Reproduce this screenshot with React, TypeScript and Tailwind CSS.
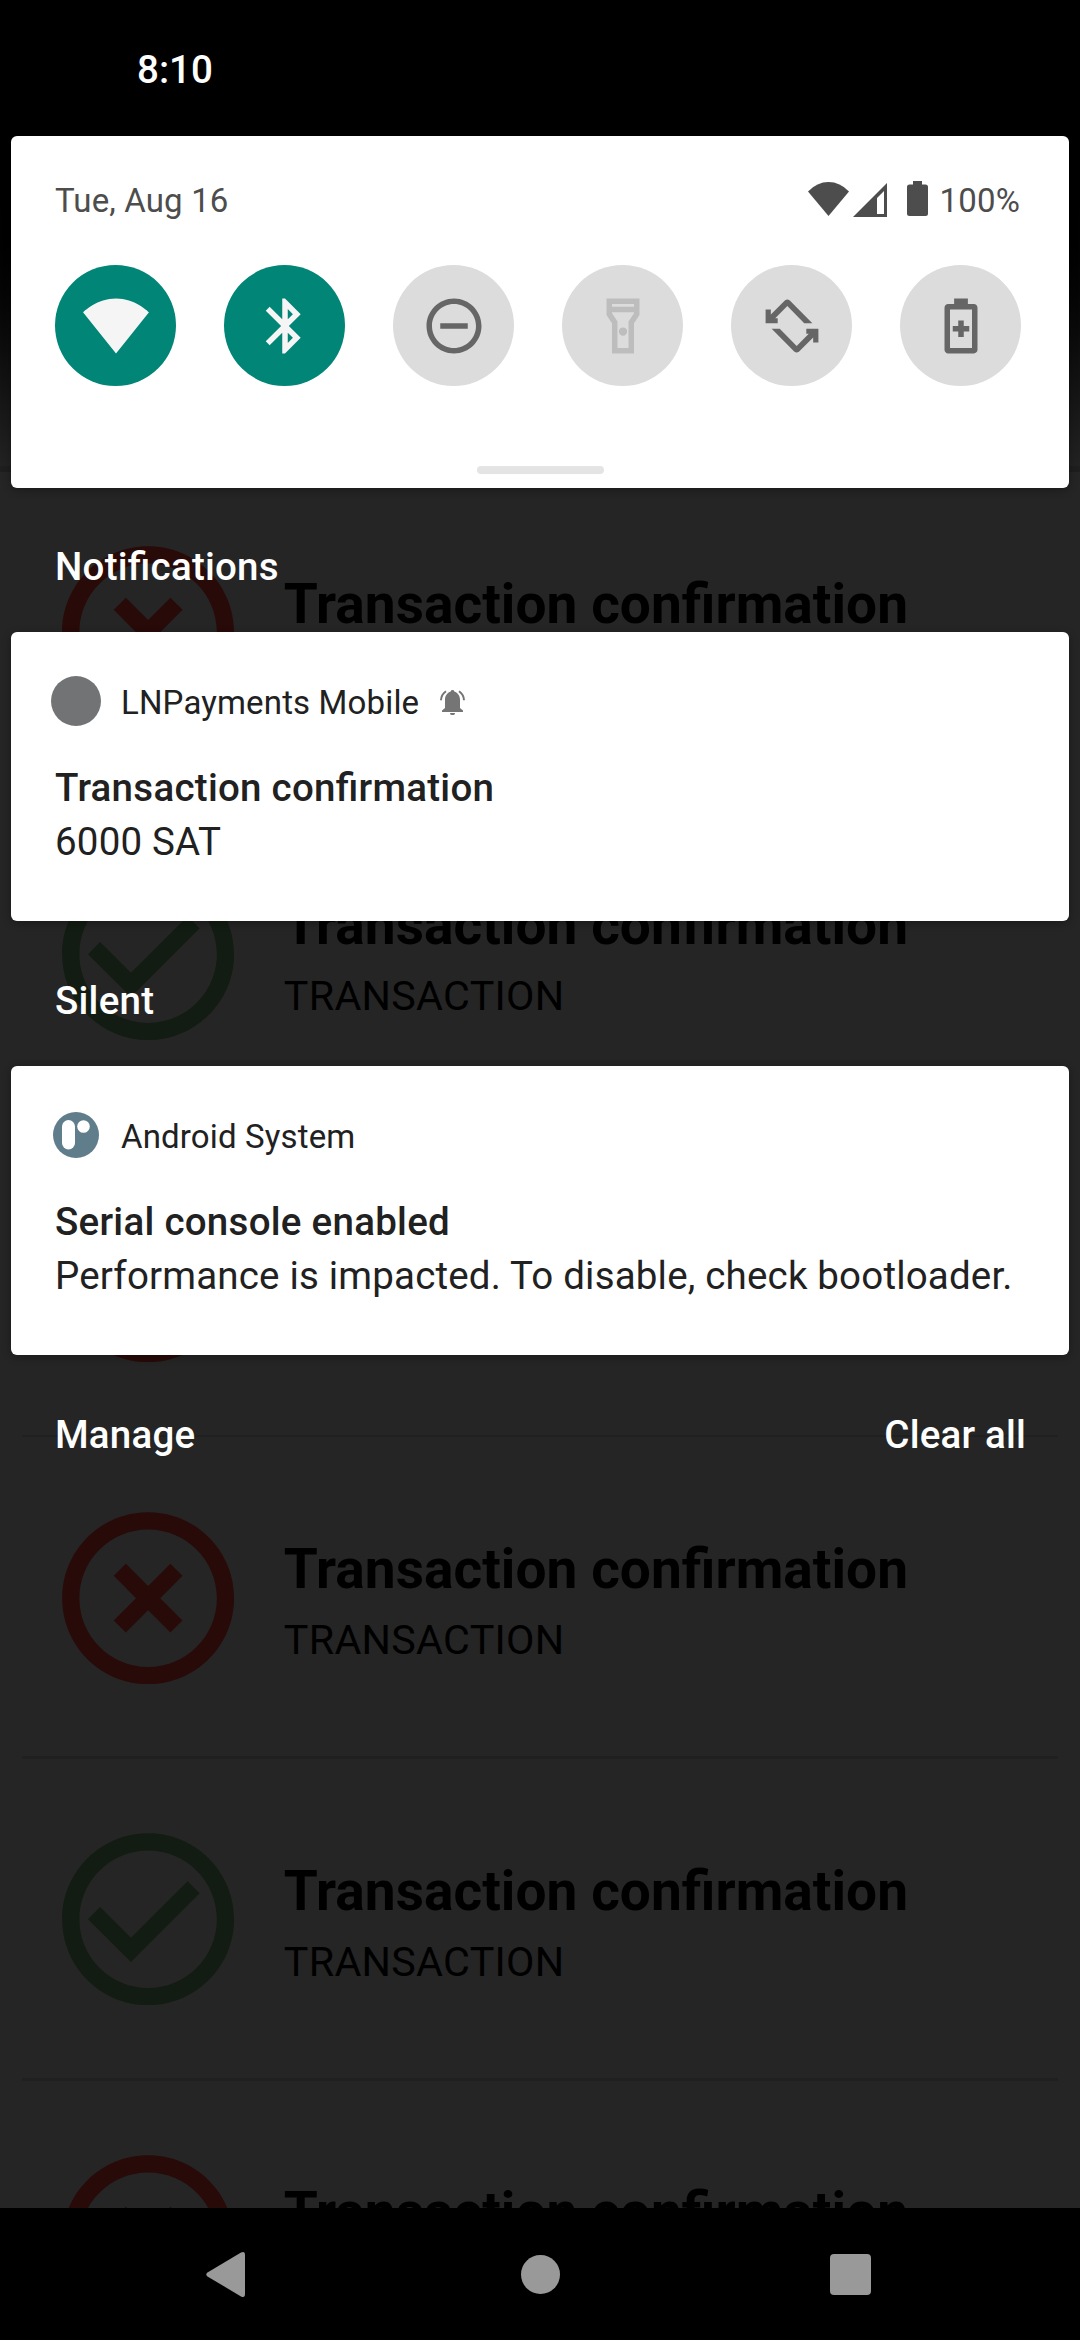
import React from "react";

type Row = { kind: "error" | "ok"; title?: string; subtitle?: string };

const TITLE = "Transaction confirmation";
const SUBTITLE = "TRANSACTION";

/* Labels that lie fully behind a card or the navigation bar are left out. */
const ROWS: Row[] = [
  { kind: "error", title: TITLE },
  { kind: "ok", title: TITLE, subtitle: SUBTITLE },
  { kind: "error" },
  { kind: "error", title: TITLE, subtitle: SUBTITLE },
  { kind: "ok", title: TITLE, subtitle: SUBTITLE },
  { kind: "error", title: TITLE },
];

function StatusMark({ kind }: { kind: "error" | "ok" }) {
  return kind === "error" ? (
    <svg viewBox="0 0 24 24" className="h-[206.25px] w-[206.25px] shrink-0 fill-[#280a08]">
      <path d="M14.59 8L12 10.59 9.41 8 8 9.41 10.59 12 8 14.59 9.41 16 12 13.41 14.59 16 16 14.59 13.41 12 16 9.41 14.59 8zM12 2C6.47 2 2 6.47 2 12s4.47 10 10 10 10-4.47 10-10S17.53 2 12 2zm0 18c-4.41 0-8-3.59-8-8s3.59-8 8-8 8 3.59 8 8-3.59 8-8 8z" />
    </svg>
  ) : (
    <svg viewBox="0 0 24 24" className="h-[206.25px] w-[206.25px] shrink-0 fill-[#121c12]">
      <path d="M12 2C6.48 2 2 6.48 2 12s4.48 10 10 10 10-4.48 10-10S17.52 2 12 2zm0 18c-4.41 0-8-3.59-8-8s3.59-8 8-8 8 3.59 8 8-3.59 8-8 8zM16.59 7.58L10 14.17l-3.59-3.58L5 12l5 5 8-8z" />
    </svg>
  );
}

/* Dimmed list of the app underneath the shade. */
function Backdrop() {
  return (
    <div className="absolute inset-0 flex flex-col overflow-hidden bg-[#252525] text-black">
      <div className="h-[466px] shrink-0 bg-linear-to-b from-black from-[150px] to-[#222222]" />
      <div className="h-[6px] shrink-0 bg-[#1e1e1e]" />
      {ROWS.map((row, i) => (
        <div key={i} className="flex h-[321.75px] shrink-0 flex-col px-[22px]">
          <div className="flex h-[319px] shrink-0 items-center pl-[22.5px] pt-[2px]">
            <StatusMark kind={row.kind} />
            <div className="flex flex-col pt-[8px] pl-[33px]">
              <div className="h-[74px] whitespace-nowrap text-[55px] font-bold leading-[74px] tracking-[0.05px] [font-feature-settings:'liga'_1]">{row.title}</div>
              <div className="mt-[2px] h-[64px] whitespace-nowrap text-[41.25px] leading-[64px] tracking-[0.3px]">{row.subtitle}</div>
            </div>
          </div>
          <div className="h-[2.75px] shrink-0 bg-[#202020]" />
        </div>
      ))}
    </div>
  );
}

const TILES = [
  { name: "wifi", tone: "bg-[#008577] text-[#f5f5f5]", d: "M12.01 21.99L24 7.0C23.53 6.65 18.9 2 12 2S.47 6.65 0 7.0z" },
  { name: "bluetooth", tone: "bg-[#008577] text-[#f5f5f5]", d: "M17.71 7.71L12 2h-1v7.59L6.41 5 5 6.41 10.59 12 5 17.59 6.41 19 11 14.41V22h1l5.71-5.71-4.3-4.29 4.3-4.29zM13 5.83l1.88 1.88L13 9.59V5.83zm1.88 10.46L13 18.17v-3.76l1.88 1.88z" },
  { name: "dnd", tone: "bg-[#dcdcdc] text-[#666666]", d: "M12 2C6.48 2 2 6.48 2 12s4.48 10 10 10 10-4.48 10-10S17.52 2 12 2zm0 18c-4.41 0-8-3.59-8-8s3.59-8 8-8 8 3.59 8 8-3.59 8-8 8zM7 11h10v2H7z" },
  { name: "torch", tone: "bg-[#dcdcdc] text-[#bdbdbd]", d: "M6 2v6l2 3v11h8V11l2-3V2H6zm10 2v1H8V4h8zm-2 6.4V20h-4V10.4L8 7.4V7h8v.4l-2 3zM12 12.5a1.5 1.5 0 1 1 0 3 1.5 1.5 0 0 1 0-3z" },
  { name: "rotate", tone: "bg-[#dcdcdc] text-[#666666]", d: "" },
  { name: "saver", tone: "bg-[#dcdcdc] text-[#666666]", d: "M16.67 4H14.5V2h-5v2H7.33C6.6 4 6 4.6 6 5.33v15.33C6 21.4 6.6 22 7.33 22h9.33c.74 0 1.34-.6 1.34-1.33V5.33C18 4.6 17.4 4 16.67 4zM16 20H8V6h8v14zm-5-4h2v-2h2v-2h-2v-2h-2v2H9v2h2z" },
];

function RotateIcon() {
  const half = "M19.4 11H16.45L10.3 4.75 5.9 9.15H6.8V11H2.4V6H4.3V7.8L9.4 2.75Q10.3 2 11.2 2.75z";
  return (
    <svg viewBox="0 0 24 24" className="mt-px ml-px h-[66px] w-[66px] fill-current">
      <path d={half} />
      <path d={half} transform="rotate(180 12 12)" />
    </svg>
  );
}

function QuickSettings() {
  return (
    <section className="mx-[11px] flex h-[352px] shrink-0 flex-col rounded-[6px] bg-white px-[44px] shadow-[0_2px_8px_rgba(0,0,0,0.3)]">
      <div className="mt-[44px] flex h-[40px] items-center justify-between text-[33px] leading-[40px] text-[#4d4d4d]">
        <span className="pt-px tracking-[0.15px]">Tue, Aug 16</span>
        <div className="flex h-[40px] items-start pr-[5px]">
          <svg viewBox="0 0 41 34" className="mt-[2px] h-[34px] w-[41px] fill-current">
            <path d="M20.5 34L41 9.5Q32 0 20.5 0T0 9.5z" />
          </svg>
          <svg viewBox="0 0 34 34" className="mt-[3px] ml-[4px] h-[34px] w-[34px] fill-current">
            <path fillRule="evenodd" d="M34 0v34H0zM31 8l-7 7v16h7z" />
          </svg>
          <svg viewBox="0 0 21 35" className="mt-[1px] ml-[20px] h-[35px] w-[21px] fill-current">
            <path d="M6 0h9v3.500h3.500Q21 3.500 21 6v26.500q0 2.500-2.500 2.500h-16Q0 35 0 32.500V6Q0 3.500 2.500 3.500H6z" />
          </svg>
          <span className="ml-[11px] pt-px tracking-[0.2px]">100%</span>
        </div>
      </div>
      <div className="mt-[45px] flex justify-between pr-[4px] pl-0">
        {TILES.map((t) => (
          <div key={t.name} className={"flex h-[121px] w-[121px] items-center justify-center rounded-full " + t.tone}>
            {t.name === "rotate" ? (
              <RotateIcon />
            ) : (
              <svg viewBox="0 0 24 24" className="mt-px ml-px h-[66px] w-[66px] fill-current">
                <path fillRule="evenodd" d={t.d} />
              </svg>
            )}
          </div>
        ))}
      </div>
      <div className="mt-[80px] h-[8px] w-[127px] self-center rounded-[4px] bg-[#e4e4e4]" />
    </section>
  );
}

function Card(props: { icon: React.ReactNode; app: string; alert?: boolean; title: string; body: string }) {
  return (
    <article className="mx-[11px] flex h-[289px] shrink-0 flex-col rounded-[6px] bg-white px-[44px] text-[38.5px] text-[#212121] shadow-[0_2px_8px_rgba(0,0,0,0.3)]">
      <div className="mt-[44px] flex h-[50px] items-center text-[33px] leading-[40px]">
        <div className="-ml-[4px] flex w-[50px] shrink-0 justify-center">{props.icon}</div>
        <span className="ml-[20px] pt-[3px] tracking-[0.15px]">{props.app}</span>
        {props.alert && (
          <svg viewBox="0 0 25 25" className="ml-[21px] mt-[3px] h-[25px] w-[25px] fill-[#757575]">
            <path d="M12.500 0a1.800 1.800 0 0 0-1.800 1.400C7 2.600 5 6 5 9.500V18l-3 2.600V22h21v-1.400L20 18V9.500C20 6 18 2.600 14.300 1.400A1.800 1.800 0 0 0 12.500 0zM10 22.900h5a2.500 2.200 0 0 1-5 0z" />
            <path d="M6 1.200Q1.200 4.500 1 10.200M19 1.200q4.800 3.300 5 9" fill="none" stroke="#757575" strokeWidth="2" />
          </svg>
        )}
      </div>
      <div className="mt-[39px] h-[46px] font-medium leading-[46px] tracking-[0.27px] [font-feature-settings:'liga'_1]">{props.title}</div>
      <div className="mt-[8px] h-[46px] whitespace-nowrap leading-[46px] tracking-[0.18px]">{props.body}</div>
    </article>
  );
}

export default function App() {
  return (
    <main className="relative h-[2340px] w-[1080px] overflow-hidden bg-black font-['Roboto',sans-serif]">
      <Backdrop />
      <div className="relative flex h-full flex-col">
        <header className="flex h-[136px] shrink-0 items-center pt-[3px] pl-[137px] text-[38.5px] font-medium leading-[46px] text-white">
          <span>8:10</span>
        </header>
        <QuickSettings />
        <h2 className="flex h-[144px] shrink-0 items-center pt-[13px] pl-[55px] text-[38.5px] font-medium leading-[46px] tracking-[0.25px] text-white [font-feature-settings:'liga'_1]">Notifications</h2>
        <Card
          app="LNPayments Mobile"
          alert
          title="Transaction confirmation"
          body="6000 SAT"
          icon={<div className="h-[50px] w-[50px] rounded-full bg-[#727375]" />}
        />
        <h2 className="flex h-[145px] shrink-0 items-center pt-[15px] pl-[55px] text-[38.5px] font-medium leading-[46px] tracking-[0.25px] text-white">Silent</h2>
        <Card
          app="Android System"
          title="Serial console enabled"
          body="Performance is impacted. To disable, check bootloader."
          icon={
            <svg viewBox="0 0 46 46" className="h-[46px] w-[46px]">
              <circle cx="23" cy="23" r="23" fill="#607d8b" />
              <rect x="9" y="8" width="13" height="29.500" rx="6.500" fill="#fff" />
              <circle cx="30.500" cy="14.500" r="6.300" fill="#fff" />
            </svg>
          }
        />
        <div className="mt-[57px] flex h-[46px] shrink-0 justify-between pr-[54px] pl-[55px] text-[38.5px] font-medium leading-[46px] tracking-[0.2px] text-white">
          <span>Manage</span>
          <span>Clear all</span>
        </div>
        <nav className="mt-auto flex h-[132px] shrink-0 items-center bg-black fill-[#999999]">
          <svg viewBox="0 0 39 45" className="ml-[206px] h-[45px] w-[39px]">
            <path d="M35 .600Q39-1.200 39 3v39q0 4.200-4 2.400L1.500 24.500Q-1 22.500 1.500 20.500z" />
          </svg>
          <div className="ml-[276px] h-[39px] w-[39px] rounded-full bg-[#999999]" />
          <div className="ml-[270px] h-[41px] w-[41px] rounded-[4px] bg-[#999999]" />
        </nav>
      </div>
    </main>
  );
}
